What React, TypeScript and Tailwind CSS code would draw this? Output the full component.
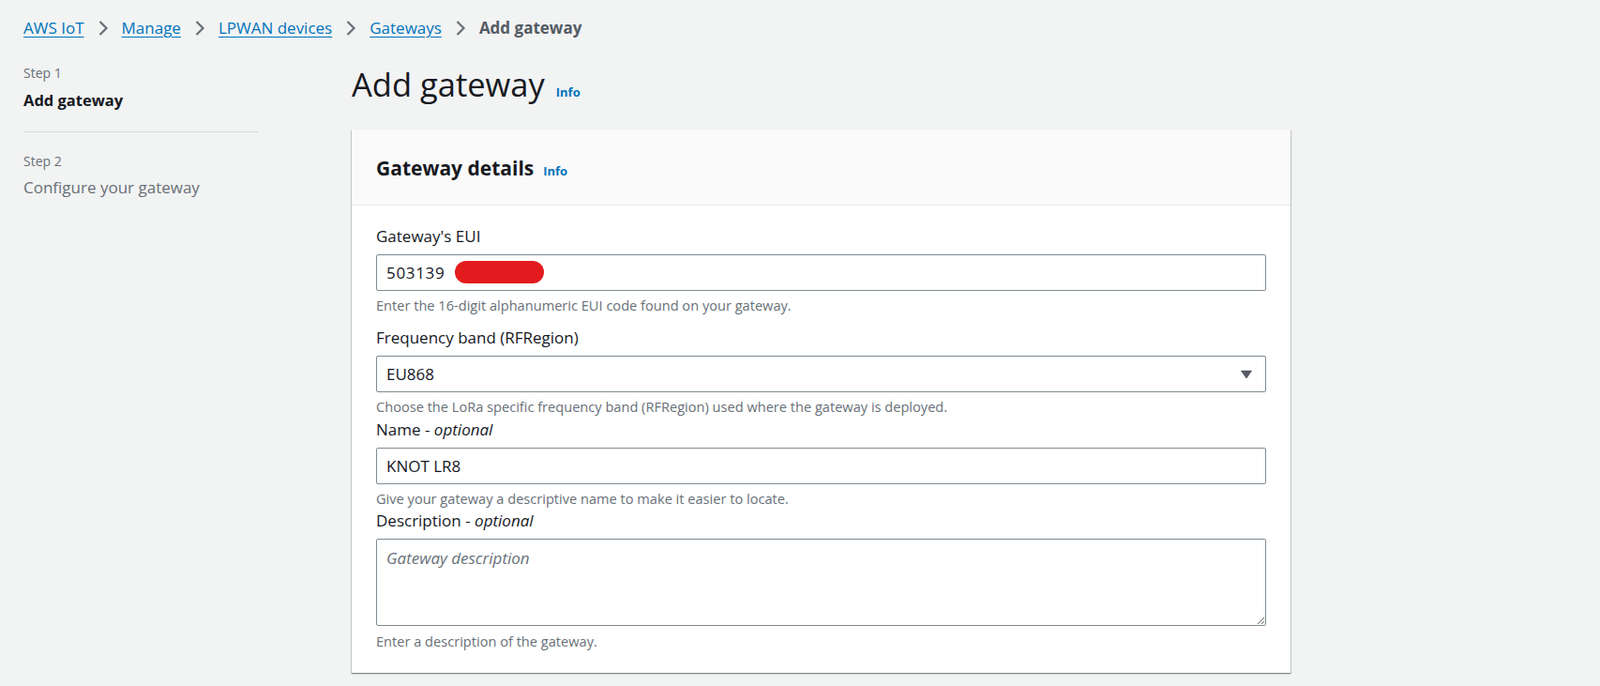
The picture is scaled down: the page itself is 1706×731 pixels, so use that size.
import React from 'react';

const Chevron: React.FC = () => (
    <svg width="14" height="16" viewBox="0 0 14 16" className="mx-[13px] shrink-0" aria-hidden="true">
        <polyline points="3.5,1 10.5,8 3.5,15" fill="none" stroke="#687078" strokeWidth="2.2" />
    </svg>
);

const crumbs = ['AWS IoT', 'Manage', 'LPWAN devices', 'Gateways'];

const Info: React.FC<{ className?: string }> = ({ className = '' }) => (
    <a href="#" className={`text-[13px] font-bold text-[#0073bb] ${className}`}>Info</a>
);

const fieldCls = 'h-[39px] w-full rounded-[2px] border border-[#7f8a93] bg-white px-[10px] text-[17px] outline-none';

export default function App() {
    return (
        <div className="min-h-[731px] bg-[#f2f3f3] font-['Open_Sans',sans-serif] text-[#16191f]">
            <nav className="flex items-center pl-[25px] pt-[18px] text-[17px] leading-6">
                {crumbs.map(c => (
                    <React.Fragment key={c}>
                        <a href="#" className="text-[#0073bb] underline underline-offset-[3px]">{c}</a>
                        <Chevron />
                    </React.Fragment>
                ))}
                <span className="font-bold text-[#545b64]">Add gateway</span>
            </nav>

            <div className="mt-[26px] flex pl-[25px]">
                <aside className="w-[250px] shrink-0">
                    <p className="text-[14px] leading-5 text-[#687078]">Step 1</p>
                    <p className="mt-[7px] text-[16.5px] font-bold leading-6">Add gateway</p>
                    <div className="mt-[21px] border-t border-[#d5dbdb]" />
                    <p className="mt-[21px] text-[14px] leading-5 text-[#687078]">Step 2</p>
                    <p className="mt-[6px] text-[17px] leading-6 text-[#687078]">Configure your gateway</p>
                </aside>

                <main className="ml-[100px] w-[1001px]">
                    <div className="flex items-baseline gap-3">
                        <h1 className="text-[34.5px] font-normal leading-[44px]">Add gateway</h1>
                        <Info />
                    </div>

                    <section className="mt-[26px] bg-white shadow-[0_1px_1px_0_rgba(0,28,36,0.3),1px_1px_1px_0_rgba(0,28,36,0.15),-1px_1px_1px_0_rgba(0,28,36,0.15)]">
                        <header className="flex items-baseline gap-[10px] border-b border-[#eaeded] bg-[#fafafa] px-[26px] pb-[25px] pt-[27px]">
                            <h2 className="text-[21px] font-bold leading-7">Gateway details</h2>
                            <Info />
                        </header>

                        <div className="px-[26px] pb-[24px] pt-[21px]">
                            <label className="block text-[17px] leading-6">Gateway's EUI</label>
                            <div className="relative mt-[7px]">
                                <input readOnly value="503139" className={`${fieldCls} tracking-[0.04em]`} />
                                <div className="absolute left-[84px] top-[7px] h-[24px] w-[95px] rounded-full bg-[#e41b1e]" />
                            </div>
                            <p className="mt-[5px] text-[14.6px] leading-5 text-[#687078]">Enter the 16-digit alphanumeric EUI code found on your gateway.</p>

                            <label className="mt-[13px] block text-[17px] leading-6">Frequency band (RFRegion)</label>
                            <div className="relative mt-[7px]">
                                <select defaultValue="EU868" className={`${fieldCls} appearance-none`}>
                                    <option>EU868</option>
                                    <option>US915</option>
                                    <option>AU915</option>
                                    <option>AS923-1</option>
                                </select>
                                <svg width="12" height="9" viewBox="0 0 12 9" className="pointer-events-none absolute right-[15px] top-1/2 -translate-y-1/2">
                                    <path d="M0.5 0.5h11L6 8.5z" fill="#545b64" stroke="#545b64" strokeLinejoin="round" />
                                </svg>
                            </div>
                            <p className="mt-[5px] text-[14.6px] leading-5 text-[#687078]">Choose the LoRa specific frequency band (RFRegion) used where the gateway is deployed.</p>

                            <label className="mt-[3px] block text-[17px] leading-6">Name - <i>optional</i></label>
                            <input readOnly value="KNOT LR8" className={`mt-[7px] block ${fieldCls}`} />
                            <p className="mt-[5px] text-[14.6px] leading-5 text-[#687078]">Give your gateway a descriptive name to make it easier to locate.</p>

                            <label className="mt-[2px] block text-[17px] leading-6">Description - <i>optional</i></label>
                            <textarea
                                placeholder="Gateway description"
                                className="mt-[7px] block h-[93px] w-full rounded-[2px] border border-[#7f8a93] bg-white px-[10px] pt-[8px] text-[17px] leading-6 outline-none placeholder:italic placeholder:text-[#687078]"
                            />
                            <p className="mt-[6px] text-[14.6px] leading-5 text-[#687078]">Enter a description of the gateway.</p>
                        </div>
                    </section>
                </main>
            </div>
        </div>
    );
}
